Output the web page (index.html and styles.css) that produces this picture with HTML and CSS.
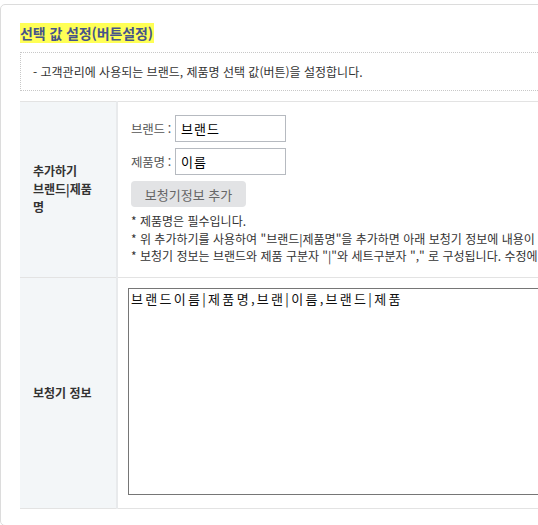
FILE: index.html
```html
<!DOCTYPE html>
<html lang="ko">
<head>
<meta charset="utf-8">
<link rel="stylesheet" href="styles.css">
</head>
<body>
<div class="card">
  <h2 class="title"><span class="mark">선택 값 설정(버튼설정)</span></h2>
  <div class="desc">- 고객관리에 사용되는 브랜드, 제품명 선택 값(버튼)을 설정합니다.</div>
  <table class="form">
    <tr>
      <th>추가하기<br>브랜드|제품<br>명</th>
      <td class="add-cell">
        <div class="field"><span class="lbl">브랜드 :</span><input class="inp" type="text" value="브랜드"></div>
        <div class="field"><span class="lbl">제품명 :</span><input class="inp" type="text" value="이름"></div>
        <button class="btn" type="button">보청기정보 추가</button>
        <ul class="notes">
          <li>* 제품명은 필수입니다.</li>
          <li>* 위 추가하기를 사용하여 "브랜드|제품명"을 추가하면 아래 보청기 정보에 내용이 추가됩니다.</li>
          <li>* 보청기 정보는 브랜드와 제품 구분자 "|"와 세트구분자 "," 로 구성됩니다. 수정에 주의하세요.</li>
        </ul>
      </td>
    </tr>
    <tr>
      <th>보청기 정보</th>
      <td class="info-cell"><textarea class="ta">브랜드이름|제품명,브랜|이름,브랜드|제품</textarea></td>
    </tr>
  </table>
</div>
</body>
</html>
```
FILE: styles.css
```css
html, body {
  margin: 0;
  padding: 0;
  overflow: hidden;
  background: #fff;
}
body {
  font-family: "Noto Sans CJK KR", "Noto Sans", sans-serif;
  color: #333;
  padding-top: 4px;
}
.card {
  width: 760px;
  border: 1px solid #dcdcdc;
  border-radius: 5px;
  padding: 18px 19px 16px 19px;
  background: #fff;
}
.title {
  margin: 0 0 9px 0;
  font-size: 14px;
  line-height: 20px;
  font-weight: 700;
  color: #46548a;
  letter-spacing: -0.1px;
}
.mark {
  background: #ffff55;
  display: inline-block;
  padding-right: 1px;
}
.desc {
  border: 1px dotted #c8c8c8;
  padding: 0 12px;
  height: 37px;
  line-height: 38px;
  font-size: 12px;
  color: #333;
  margin-bottom: 10px;
}
.form {
  width: 100%;
  border-collapse: collapse;
  border-top: 1px solid #e3e3e3;
  border-bottom: 1px solid #e3e3e3;
}
.form th {
  width: 70px;
  background: #f3f6f8;
  border-right: 2px solid #e8eaec;
  padding: 0 13px;
  text-align: left;
  font-size: 12px;
  line-height: 18px;
  font-weight: 700;
  color: #333;
  vertical-align: middle;
}
.form tr + tr th, .form tr + tr td {
  border-top: 1px solid #e3e3e3;
}
.add-cell {
  padding: 13px 13px 12px 13px;
  vertical-align: top;
}
.field {
  display: flex;
  align-items: center;
  gap: 4px;
  margin-bottom: 6px;
}
.lbl {
  font-size: 12.5px;
  color: #555;
  letter-spacing: -0.3px;
}
.inp {
  width: 99px;
  height: 25px;
  border: 1px solid #b6bac0;
  padding: 0 5px;
  margin: 0;
  font-family: "Noto Sans CJK KR", sans-serif;
  font-size: 13px;
  letter-spacing: 1px;
  color: #000;
  box-sizing: content-box;
  outline: none;
}
.btn {
  display: block;
  width: 115px;
  height: 26px;
  margin: 1px 0 5px 0;
  padding: 0;
  border: none;
  border-radius: 4px;
  background: #e2e3e5;
  color: #666;
  font-family: "Noto Sans CJK KR", sans-serif;
  font-size: 13px;
}
.notes {
  list-style: none;
  margin: 0;
  padding: 0;
  font-size: 12px;
  line-height: 17.5px;
  color: #333;
  white-space: nowrap;
}
.info-cell {
  padding: 10px 10px 13px 10px;
  vertical-align: top;
}
.ta {
  display: block;
  width: 600px;
  height: 201px;
  margin: 0;
  padding: 1px 2px 3px 2px;
  border: 1px solid #767676;
  font-family: "Noto Sans CJK KR", monospace;
  font-size: 13px;
  font-weight: 400;
  line-height: 18px;
  letter-spacing: 2.3px;
  color: #111;
  resize: none;
  box-sizing: content-box;
}
```
